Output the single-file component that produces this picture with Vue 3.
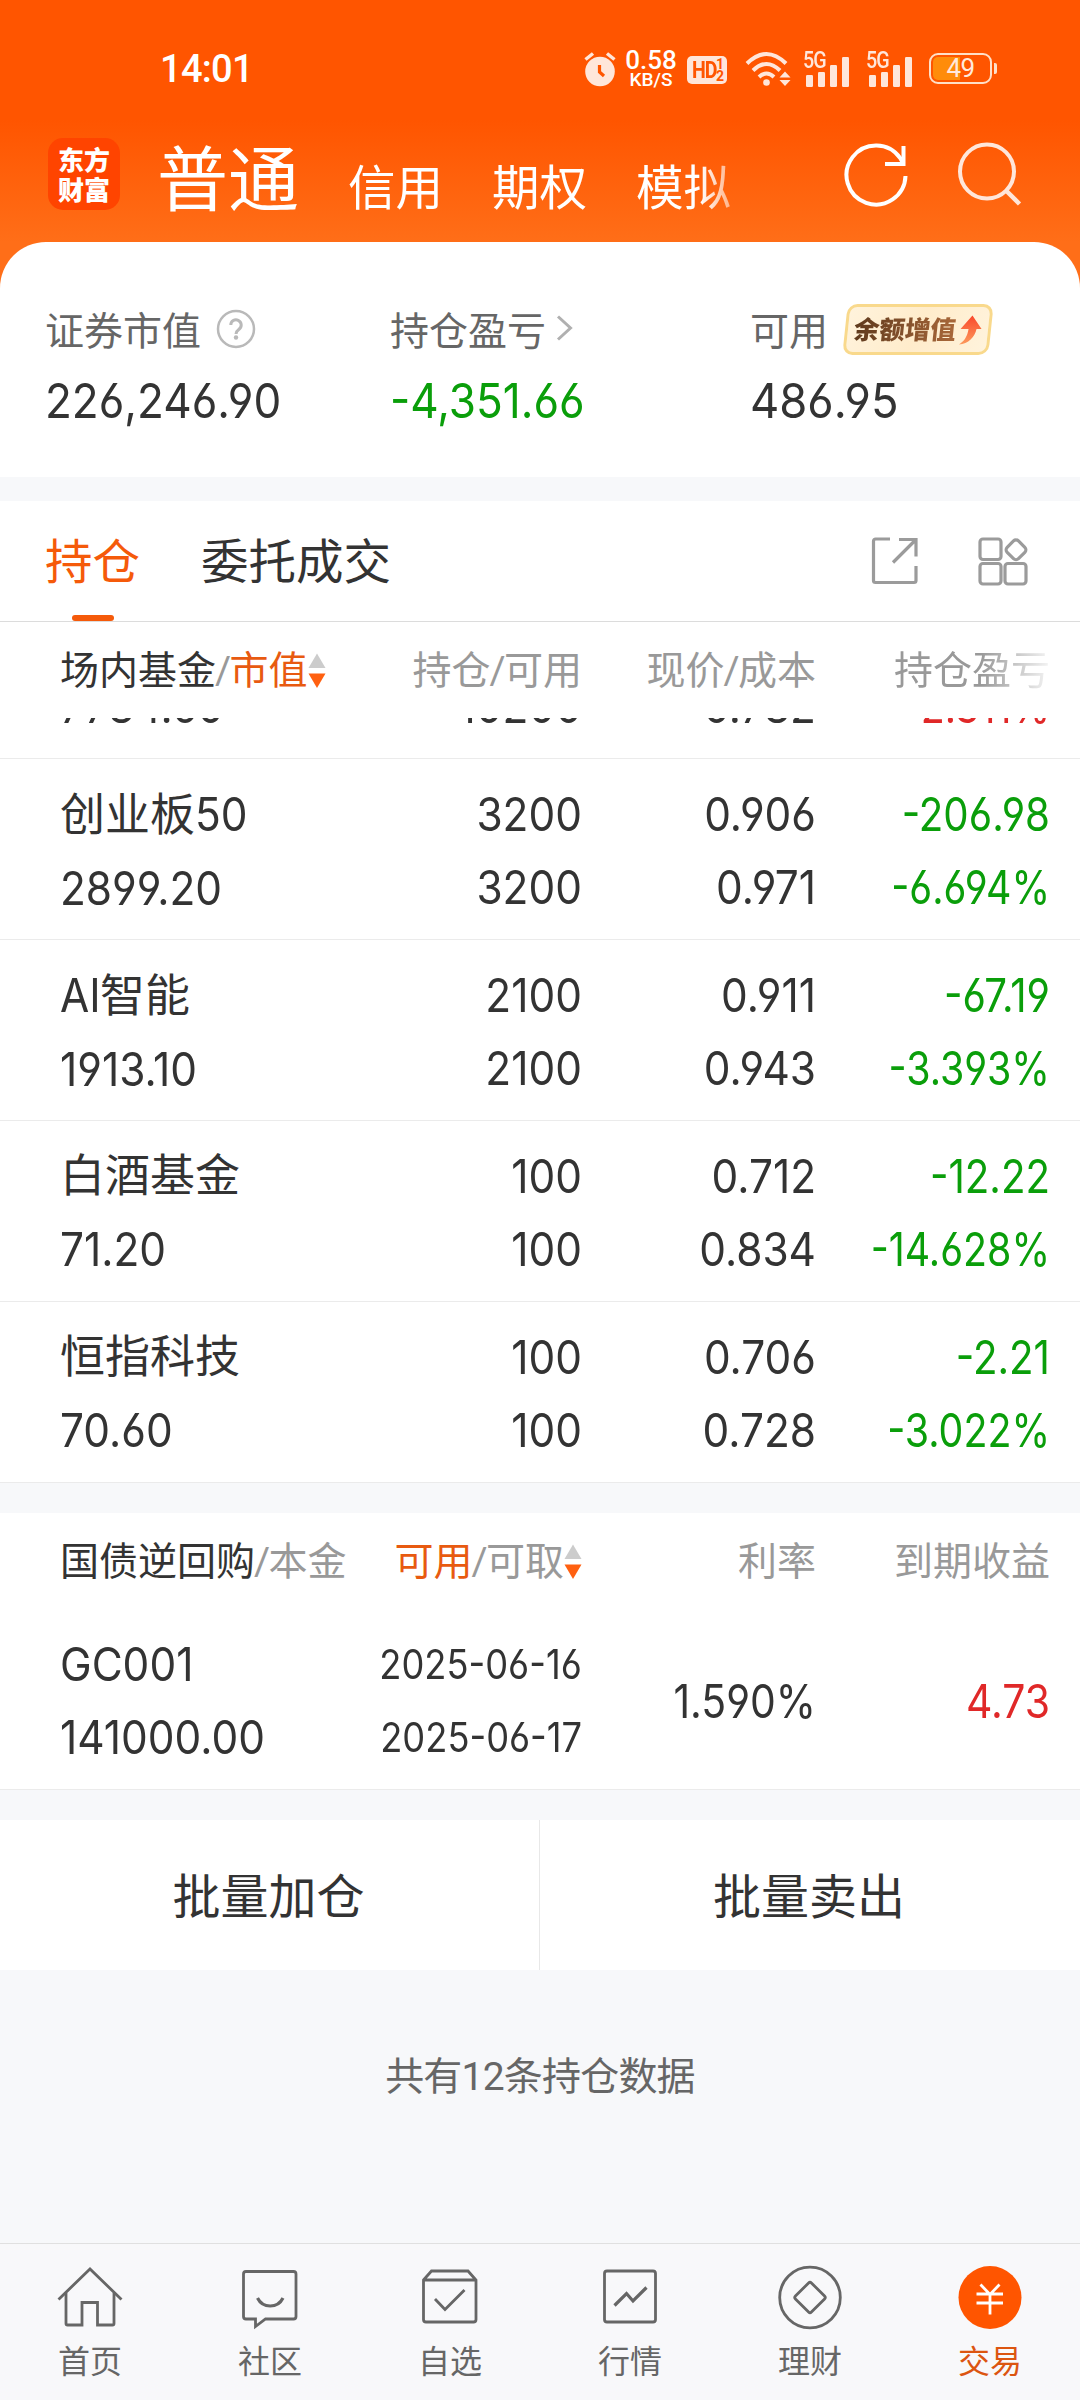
<script setup>
import { ref } from 'vue'

const accountTabs = ['信用', '期权', '模拟']

const signalBars = [
  { x: 3, h: 12 },
  { x: 15, h: 15 },
  { x: 27, h: 22 },
  { x: 39, h: 30 }
]

const activeTab = ref('持仓')
const tabs = ['持仓', '委托成交']

const holdings = [
  { name: '创业板', suffix: '50', value: '2899.20', amount: '3200', usable: '3200', price: '0.906', cost: '0.971', profit: '-206.98', rate: '-6.694%' },
  { prefix: 'AI', name: '智能', value: '1913.10', amount: '2100', usable: '2100', price: '0.911', cost: '0.943', profit: '-67.19', rate: '-3.393%' },
  { name: '白酒基金', value: '71.20', amount: '100', usable: '100', price: '0.712', cost: '0.834', profit: '-12.22', rate: '-14.628%' },
  { name: '恒指科技', value: '70.60', amount: '100', usable: '100', price: '0.706', cost: '0.728', profit: '-2.21', rate: '-3.022%' }
]

const navItems = [
  { label: '首页', icon: 'home' },
  { label: '社区', icon: 'chat' },
  { label: '自选', icon: 'pick' },
  { label: '行情', icon: 'quote' },
  { label: '理财', icon: 'wealth' },
  { label: '交易', icon: 'trade' }
]
const activeNav = ref('trade')
</script>

<template>
  <div class="app">
    <header class="top">
      <div class="status">
        <span class="clock">14:01</span>
        <div class="status-icons">
          <svg class="alarm" width="32" height="36" viewBox="0 0 32 36">
            <circle cx="16" cy="20.500" r="14.800" fill="#ffe6da" />
            <path d="M1.500 8.500L9 2.500M30.500 8.500L23 2.500" stroke="#ffe6da" stroke-width="3.500" fill="none" />
            <path d="M15.500 14v7l4.500 4" stroke="#ff5500" stroke-width="3.200" fill="none" />
          </svg>
          <div class="speed">
            <span class="speed-num">0.58</span>
            <span class="speed-unit">KB/S</span>
          </div>
          <div class="hd">
            <span class="hd-main">HD</span>
            <span class="hd-sub"><i>1</i><i>2</i></span>
          </div>
          <svg class="wifi" width="46" height="36" viewBox="0 0 46 36">
            <g fill="none" stroke="#ffe6da" stroke-width="4">
              <path d="M2 12.500Q21.500 -6.500 41 12.500" />
              <path d="M8 19.500Q21.500 6.500 35 19.500" />
              <path d="M14 26Q21.500 19 29 26" />
            </g>
            <circle cx="21.500" cy="31.500" r="3.300" fill="#ffe6da" />
            <path d="M34.500 26.500l5.500-6 5.500 6zM34.500 29l5.500 6 5.500-6z" fill="#ffe6da" />
          </svg>
          <div v-for="n in 2" :key="n" class="signal">
            <span class="signal-label">5G</span>
            <svg width="48" height="34" viewBox="0 0 48 34">
              <rect v-for="b in signalBars" :key="b.x" :x="b.x" :y="34 - b.h" width="7" :height="b.h" rx="1.200" fill="#ffe6da" />
            </svg>
          </div>
          <div class="battery">
            <div class="battery-fill"></div>
            <span class="battery-text">49</span>
          </div>
        </div>
      </div>

      <div class="accounts">
        <div class="logo"><span>东方</span><span>财富</span></div>
        <div class="account-scroll">
          <span class="account-active">普通</span>
          <span v-for="t in accountTabs" :key="t" class="account">{{ t }}</span>
        </div>
        <svg class="refresh" width="66" height="66" viewBox="0 0 66 66" fill="none" stroke="#fff" stroke-width="4">
          <path d="M62.500 34A29.500 29.500 0 1 1 57.200 16.100L60.500 22" />
          <path d="M60.500 4V22H42" />
        </svg>
        <svg class="search" width="66" height="66" viewBox="0 0 66 66" fill="none" stroke="#ffe6da" stroke-width="4">
          <circle cx="30" cy="29.500" r="27" />
          <path d="M49 48.500L62.500 62" stroke-width="4.500" />
        </svg>
      </div>
    </header>

    <section class="summary">
      <div class="summary-item first">
        <div class="summary-label">
          证券市值
          <svg class="help" width="40" height="40" viewBox="0 0 40 40" fill="none" stroke="#b9b9b9">
            <circle cx="20" cy="20" r="18" stroke-width="2.500" />
            <path d="M14.800 16a5.200 5.200 0 1 1 8.500 4c-2 1.600-3.300 2.500-3.300 5" stroke-width="3" />
            <circle cx="20" cy="28.500" r="2.200" fill="#b9b9b9" stroke="none" />
          </svg>
        </div>
        <div class="summary-value">226,246.90</div>
      </div>
      <div class="summary-item second">
        <div class="summary-label">
          持仓盈亏
          <svg class="chevron" width="18" height="28" viewBox="0 0 18 28" fill="none" stroke="#b0b0b0" stroke-width="3">
            <path d="M2 2.500L14.500 14L2 25.500" />
          </svg>
        </div>
        <div class="summary-value green">-4,351.66</div>
      </div>
      <div class="summary-item">
        <div class="summary-label">
          可用
          <div class="badge">
            <span class="badge-text">余额增值</span>
            <svg width="22" height="30" viewBox="0 0 22 30">
              <defs>
                <linearGradient id="rise" x1="0" y1="0" x2="0" y2="1">
                  <stop offset="0" stop-color="#f9482c" />
                  <stop offset="1" stop-color="#fd9a5c" />
                </linearGradient>
              </defs>
              <path d="M11 0.500L21.500 14H16.500C15.500 22 10 29 0.500 29.500C6 26 8 21 8.500 14H0.500Z" fill="url(#rise)" />
            </svg>
          </div>
        </div>
        <div class="summary-value wide">486.95</div>
      </div>
    </section>

    <section class="tabs">
      <div v-for="t in tabs" :key="t" class="tab" :class="{ active: t === activeTab }">{{ t }}</div>
      <svg class="share" width="48" height="48" viewBox="0 0 48 48" fill="none" stroke="#9b9b9b" stroke-width="3.200">
        <path d="M19 2H4.500A2 2 0 0 0 2.500 4V43.500A2 2 0 0 0 4.500 45.500H43A2 2 0 0 0 45 43.500V29" />
        <path d="M28 2.500H45V19.500M44 3.500L22 25.500" />
      </svg>
      <svg class="widgets" width="52" height="50" viewBox="0 0 52 50" fill="none" stroke="#9b9b9b" stroke-width="3.200">
        <rect x="2" y="2" width="21" height="20.500" rx="3" />
        <rect x="2" y="26.500" width="21" height="20.500" rx="3" />
        <rect x="27" y="26.500" width="21" height="20.500" rx="3" />
        <rect x="30" y="4.800" width="16" height="16" rx="3.500" transform="rotate(45 38 12.800)" />
      </svg>
    </section>

    <section class="table">
      <div class="thead">
        <div class="col name">
          <span class="dark">场内基金</span><i>/</i><span class="hot">市值</span>
          <svg class="sort" width="18" height="36" viewBox="0 0 18 36">
            <path d="M9 0.500L17.500 15H0.500z" fill="#ccc" />
            <path d="M9 35L17.500 20.500H0.500z" fill="#ff6010" />
          </svg>
        </div>
        <div class="col amount">持仓<i>/</i>可用</div>
        <div class="col price">现价<i>/</i>成本</div>
        <div class="col profit faded">持仓盈亏</div>
      </div>

      <!-- row scrolled under the sticky header -->
      <div class="clipped">
        <div class="row">
          <div class="col name"><span class="num">7784.60</span></div>
          <div class="col amount"><span class="num">10200</span></div>
          <div class="col price"><span class="num">0.782</span></div>
          <div class="col profit red"><span class="num rate">2.311%</span></div>
        </div>
      </div>

      <div v-for="h in holdings" :key="h.name" class="row">
        <div class="col name">
          <span class="title"><span v-if="h.prefix" class="num prefix">{{ h.prefix }}</span>{{ h.name }}<span v-if="h.suffix" class="num suffix">{{ h.suffix }}</span></span>
          <span class="num">{{ h.value }}</span>
        </div>
        <div class="col amount">
          <span class="num">{{ h.amount }}</span>
          <span class="num">{{ h.usable }}</span>
        </div>
        <div class="col price">
          <span class="num">{{ h.price }}</span>
          <span class="num">{{ h.cost }}</span>
        </div>
        <div class="col profit green">
          <span class="num">{{ h.profit }}</span>
          <span class="num rate">{{ h.rate }}</span>
        </div>
      </div>
    </section>

    <section class="table repo">
      <div class="thead">
        <div class="col name"><span class="dark">国债逆回购</span><i>/</i>本金</div>
        <div class="col amount">
          <span class="hot">可用</span><i>/</i>可取
          <svg class="sort" width="18" height="36" viewBox="0 0 18 36">
            <path d="M9 0.500L17.500 15H0.500z" fill="#ccc" />
            <path d="M9 35L17.500 20.500H0.500z" fill="#ff6010" />
          </svg>
        </div>
        <div class="col price">利率</div>
        <div class="col profit">到期收益</div>
      </div>
      <div class="row">
        <div class="col name">
          <span class="num">GC001</span>
          <span class="num">141000.00</span>
        </div>
        <div class="col amount">
          <span class="num date">2025-06-16</span>
          <span class="num date">2025-06-17</span>
        </div>
        <div class="col price"><span class="num yield">1.590%</span></div>
        <div class="col profit red"><span class="num yield">4.73</span></div>
      </div>
    </section>

    <section class="batch">
      <button type="button">批量加仓</button>
      <button type="button">批量卖出</button>
    </section>

    <p class="total">共有12条持仓数据</p>

    <nav class="nav">
      <div v-for="item in navItems" :key="item.icon" class="nav-item" :class="{ active: item.icon === activeNav }">
        <svg width="66" height="66" viewBox="0 0 66 66" fill="none" stroke="#666" stroke-width="2.800">
          <g v-if="item.icon === 'home'">
            <path d="M1.500 35.500L33 5L64.500 35.500" />
            <path d="M9 29V59.500A1.500 1.500 0 0 0 10.500 61H25V38.500H40.500V61H55.500A1.500 1.500 0 0 0 57 59.500V29" />
          </g>
          <g v-else-if="item.icon === 'chat'">
            <path d="M9 7.500H56.500A2.500 2.500 0 0 1 59 10V52.500A2.500 2.500 0 0 1 56.500 55H28.500L18.500 62.500V55H9A2.500 2.500 0 0 1 6.500 52.500V10A2.500 2.500 0 0 1 9 7.500Z" />
            <path d="M20.500 34Q24.500 42 33.200 42Q42 42 46 34" stroke-width="3.200" />
          </g>
          <g v-else-if="item.icon === 'pick'">
            <path d="M6.500 16L14.500 7H51L59 16V55.500A2.500 2.500 0 0 1 56.500 58H9A2.500 2.500 0 0 1 6.500 55.500ZM6.500 16H59" />
            <path d="M18 35L28 45.500L47.500 26" />
          </g>
          <g v-else-if="item.icon === 'quote'">
            <rect x="7.500" y="7" width="51" height="51" rx="2.500" />
            <path d="M17.500 41.500L29.500 29.500L36 37L49.500 23.500" stroke-width="3.200" />
          </g>
          <g v-else-if="item.icon === 'wealth'">
            <circle cx="33" cy="33.500" r="30.300" />
            <rect x="21.700" y="22.200" width="22.600" height="22.600" rx="2" transform="rotate(45 33 33.500)" />
          </g>
          <g v-else>
            <circle cx="33" cy="33.500" r="31.500" fill="#ff5500" stroke="none" />
            <path d="M23.500 20.500L33 30.500L42.500 20.500M19.500 30H46M19.500 39H46M33 30V50.500" stroke="#fff" />
          </g>
        </svg>
        <span>{{ item.label }}</span>
      </div>
    </nav>
  </div>
</template>

<style>
body {
  margin: 0;
  background: #f7f8fa;
}
</style>

<style scoped>
.app {
  width: 1080px;
  height: 2400px;
  display: flex;
  flex-direction: column;
  overflow: hidden;
  background: #f7f8fa;
  color: #333;
  font-family: Roboto, 'Noto Sans CJK SC', sans-serif;
  font-size: 39px;
}

i {
  font-style: normal;
}

.top {
  flex: none;
  height: 300px;
  box-sizing: border-box;
  margin-bottom: -58px;
  background: linear-gradient(#ff5500 120px, #ff6e18 242px);
  color: #fff;
}

.status {
  height: 138px;
  box-sizing: border-box;
  padding: 51px 84px 0 160px;
  display: flex;
  justify-content: space-between;
}

.clock {
  font-size: 38px;
  line-height: 36px;
  font-weight: 500;
  letter-spacing: -0.7px;
}

.status-icons {
  display: flex;
  height: 36px;
}

.speed {
  margin-left: 9px;
  width: 52px;
  display: flex;
  flex-direction: column;
  align-items: center;
  font-weight: 500;
}

.speed-num {
  font-size: 26px;
  line-height: 19px;
}

.speed-unit {
  font-size: 19px;
  line-height: 20px;
}

.hd {
  margin: 5px 0 0 10px;
  width: 40px;
  height: 28px;
  border-radius: 5px;
  background: #ffe6da;
  color: #ff5500;
  display: flex;
  justify-content: center;
  align-items: center;
  font-weight: 700;
}

.hd-main {
  font-size: 23px;
  letter-spacing: -1.5px;
  transform: scaleX(0.85);
}

.hd-sub {
  display: flex;
  flex-direction: column;
  font-size: 14px;
  line-height: 12px;
  margin-left: -2px;
}

.wifi {
  margin-left: 18px;
}

.signal {
  position: relative;
  width: 48px;
  margin-left: 15px;
}

.wifi + .signal {
  margin-left: 12px;
}

.signal-label {
  position: absolute;
  left: 0;
  top: 0;
  font-size: 24px;
  line-height: 18px;
  font-weight: 500;
  letter-spacing: -1px;
  transform: scaleX(0.82);
  transform-origin: left;
  color: #ffe6da;
}

.battery {
  position: relative;
  box-sizing: border-box;
  width: 63px;
  height: 31px;
  margin: 2px 4px 0 15px;
  border: 2.5px solid #ffe0c8;
  border-radius: 9px;
}

.battery::after {
  content: '';
  position: absolute;
  right: -7px;
  top: 8px;
  width: 3px;
  height: 11px;
  border-radius: 0 2px 2px 0;
  background: #ffe0c8;
}

.battery-fill {
  position: absolute;
  left: 2px;
  top: 2px;
  bottom: 2px;
  width: 27px;
  border-radius: 5px 0 0 5px;
  background: #ff8c0a;
}

.battery-text {
  position: absolute;
  inset: 0;
  text-align: center;
  font-size: 26px;
  line-height: 27px;
  letter-spacing: -0.5px;
  color: #ffe9dc;
}

.accounts {
  display: flex;
  height: 104px;
  padding-left: 48px;
}

.logo {
  width: 72px;
  height: 72px;
  border-radius: 15px;
  background: #ff4400;
  display: flex;
  flex-direction: column;
  align-items: center;
  justify-content: center;
  font-family: 'Noto Sans CJK SC', sans-serif;
  font-weight: 900;
  font-size: 26px;
  line-height: 30px;
}

.account-scroll {
  width: 623px;
  height: 104px;
  margin-left: 37px;
  display: flex;
  align-items: baseline;
  overflow: hidden;
  white-space: nowrap;
  font-family: 'Noto Sans CJK SC', sans-serif;
  -webkit-mask-image: linear-gradient(90deg, #000 543px, transparent 605px);
  mask-image: linear-gradient(90deg, #000 543px, transparent 605px);
}

.account-active {
  font-size: 71px;
  line-height: 72px;
}

.account {
  font-size: 47.5px;
  line-height: 70px;
  margin-left: 49px;
}

.refresh {
  margin: 4px 0 0 63px;
}

.search {
  margin: 4px 0 0 48px;
}

.summary {
  flex: none;
  box-sizing: border-box;
  height: 235px;
  padding: 60px 0 0 45px;
  border-radius: 46px 46px 0 0;
  background: #fff;
  display: flex;
}

.summary-item {
  white-space: nowrap;
}

.first {
  width: 345px;
}

.second {
  width: 360px;
}

.summary-label {
  display: flex;
  align-items: center;
  height: 52px;
  color: #666;
}

.help {
  margin: 2px 0 0 15px;
}

.chevron {
  margin-left: 10px;
}

.summary-value {
  margin-top: 20px;
  font-family: Inter, sans-serif;
  font-feature-settings: 'cv03', 'cv04';
  font-size: 48px;
  line-height: 54px;
  transform: scaleX(0.918);
  transform-origin: left;
}

.summary-value.wide {
  transform: scaleX(0.945);
}

.badge {
  margin: 2px 0 0 17px;
  width: 146px;
  height: 51px;
  box-sizing: border-box;
  border: 3px solid #f9d98c;
  border-radius: 10px;
  background: linear-gradient(110deg, #fff3dc, #ffeccb 50%, #fff3dc);
  transform: skewX(-6deg);
  display: flex;
  align-items: center;
  justify-content: center;
  gap: 4px;
}

.badge-text {
  font-size: 25.5px;
  line-height: 30px;
  font-weight: 900;
  background: linear-gradient(90deg, #5f3a1d, #a9683a);
  -webkit-background-clip: text;
  background-clip: text;
  color: transparent;
}

.tabs {
  flex: none;
  box-sizing: border-box;
  height: 121px;
  margin-top: 24px;
  padding-left: 45px;
  background: #fff;
  border-bottom: 1px solid #dcdcdc;
  display: flex;
  align-items: center;
}

.tab {
  position: relative;
  margin-right: 61px;
  font-size: 47.5px;
  line-height: 125px;
  height: 120px;
}

.tab.active {
  color: #f55a0a;
}

.tab.active::after {
  content: '';
  position: absolute;
  left: 27px;
  bottom: 0;
  width: 42px;
  height: 6px;
  border-radius: 3px;
  background: #f55a0a;
}

.share {
  margin-left: 419px;
}

.widgets {
  margin-left: 59px;
  margin-top: 2px;
}

.table {
  flex: none;
  background: #fff;
}

.thead,
.row {
  display: flex;
}

.thead {
  height: 96px;
  line-height: 100px;
  padding-top: 2px;
  box-sizing: border-box;
  color: #999;
  white-space: nowrap;
}

.thead .col {
  display: flex;
  align-items: center;
}

.thead i {
  margin: 0 -1.5px 0 -1px;
}

.thead .amount,
.thead .price,
.thead .profit {
  justify-content: flex-end;
}

.sort {
  flex: none;
}

.name {
  width: 310px;
  padding-left: 60px;
}

.amount {
  width: 212px;
  text-align: right;
}

.price {
  width: 234px;
  text-align: right;
}

.profit {
  width: 234px;
  text-align: right;
}

.faded {
  -webkit-mask-image: linear-gradient(90deg, #000 165px, transparent 242px);
  mask-image: linear-gradient(90deg, #000 165px, transparent 242px);
}

.row {
  box-sizing: border-box;
  height: 181px;
  padding-top: 19px;
  border-bottom: 1px solid #ebebeb;
  white-space: nowrap;
}

.row .col {
  display: flex;
  flex-direction: column;
  height: 146px;
  justify-content: center;
}

.title {
  font-size: 45px;
  line-height: 73px;
}

.num {
  font-family: Inter, sans-serif;
  font-feature-settings: 'cv03', 'cv04';
  font-size: 46px;
  line-height: 73px;
  transform: scaleX(0.922);
  transform-origin: right;
}

.name .num {
  transform-origin: left;
}

.profit .num {
  transform: scaleX(0.875);
}

.profit .rate {
  transform: scaleX(0.855);
}

.num.yield {
  transform: scaleX(0.89);
}

/* ten characters wider than the column before scaling, so let it grow left */
.repo .date {
  align-self: flex-end;
  font-size: 41px;
  transform: scaleX(0.885);
}

.title .num {
  display: inline-block;
}

.title .prefix {
  margin-right: -4px;
}

.clipped {
  height: 41px;
  display: flex;
  flex-direction: column;
  justify-content: flex-end;
  overflow: hidden;
}

.clipped .row {
  flex: none;
}

.clipped .col {
  justify-content: flex-end;
}

.dark {
  color: #333;
}

.hot {
  color: #e85a10;
}

.green {
  color: #0a9e0a;
}

.red {
  color: #e02828;
}

.repo {
  margin-top: 30px;
}

.batch {
  flex: none;
  display: flex;
  height: 150px;
  margin-top: 30px;
}

.batch button {
  box-sizing: border-box;
  width: 539px;
  border: 0;
  padding: 0 2px 4px 0;
  background: #fff;
  color: #333;
  font: inherit;
  font-size: 48px;
}

.batch button + button {
  width: 541px;
  border-left: 1px solid #e8e8e8;
}

.total {
  margin: 0;
  padding-top: 82px;
  line-height: 50px;
  text-align: center;
  letter-spacing: -0.8px;
  color: #666;
}

.nav {
  flex: none;
  box-sizing: border-box;
  height: 157px;
  margin-top: auto;
  padding-top: 20px;
  border-top: 1px solid #e0e0e0;
  background: #f8f8fa;
  display: flex;
}

.nav-item {
  flex: 1;
  display: flex;
  flex-direction: column;
  align-items: center;
  font-size: 32px;
  line-height: 40px;
  color: #666;
}

.nav-item span {
  margin-top: 12px;
}

.nav-item.active {
  color: #dc5510;
}
</style>
